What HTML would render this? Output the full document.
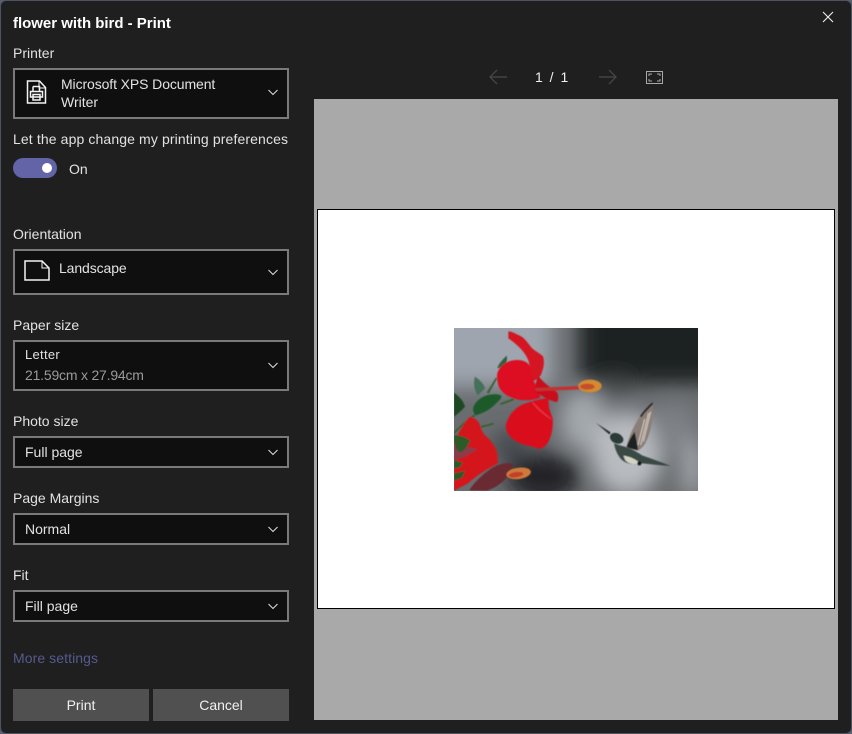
<!DOCTYPE html>
<html><head><meta charset="utf-8">
<style>
html,body{margin:0;padding:0;width:852px;height:734px;overflow:hidden;background:#5a5f72}
#win{position:absolute;left:1px;top:1px;width:850px;height:732px;background:#1f1f1f;border-radius:5px;box-shadow:0 0 0 1px #4f5260}
.t{position:absolute;font-family:"Liberation Sans",sans-serif;font-size:14px;color:#e2e2e2;white-space:nowrap;line-height:18px}
.box{position:absolute;left:13px;width:272px;background:#0f0f0f;border:2px solid #7a7a7a;box-sizing:content-box}
.chev{position:absolute;left:268px}
.btn{position:absolute;top:689px;width:136px;height:32px;background:#505050;color:#f0f0f0;font:14px/32px "Liberation Sans",sans-serif;text-align:center}
svg{position:absolute}
</style></head><body>
<div id="win"></div>

<div class="t" style="left:13px;top:15px;font-weight:bold;color:#fff;font-size:15px;letter-spacing:-.02px">flower with bird - Print</div>
<div class="t" style="left:13px;top:44px">Printer</div>

<div class="box" style="top:68px;height:47px"></div>
<svg style="left:26px;top:80px" width="21" height="24" viewBox="0 0 21 24" fill="none" stroke="#f4f4f4" stroke-width="1.5"><path d="M1.5 1h12l6 6.5V23h-18z"/><path d="M13 1v7h6.5" stroke-width="1"/><path d="M7 6.5h6.5v5M7 6.5v5M4.5 11.5h12V17h-12zM7 14.5h7V20H7z"/></svg>
<div class="t" style="left:61px;top:75px;letter-spacing:-.1px">Microsoft XPS Document</div>
<div class="t" style="left:61px;top:93px">Writer</div>

<div class="t" style="left:13px;top:130px;letter-spacing:.12px">Let the app change my printing preferences</div>
<div style="position:absolute;left:13px;top:158px;width:44px;height:20px;border-radius:10px;background:#6264a7"></div>
<div style="position:absolute;left:42px;top:163px;width:10px;height:10px;border-radius:50%;background:#fff"></div>
<div class="t" style="left:69px;top:160px">On</div>

<div class="t" style="left:13px;top:225px">Orientation</div>
<div class="box" style="top:249px;height:42px"></div>
<svg style="left:24px;top:260px" width="26" height="21" viewBox="0 0 26 21" fill="none" stroke="#f4f4f4" stroke-width="1.5"><path d="M1 1h17l7 7v12H1z"/><path d="M18 1v7h7" stroke-width="1"/></svg>
<div class="t" style="left:59px;top:259px;letter-spacing:-.1px">Landscape</div>

<div class="t" style="left:13px;top:316px">Paper size</div>
<div class="box" style="top:340px;height:47px"></div>
<div class="t" style="left:25px;top:346px;font-size:13px;letter-spacing:.3px">Letter</div>
<div class="t" style="left:25px;top:366px;color:#9a9a9a;letter-spacing:-.2px">21.59cm x 27.94cm</div>

<div class="t" style="left:13px;top:412px">Photo size</div>
<div class="box" style="top:436px;height:28px"></div>
<div class="t" style="left:25px;top:443px">Full page</div>

<div class="t" style="left:13px;top:489px">Page Margins</div>
<div class="box" style="top:513px;height:28px"></div>
<div class="t" style="left:25px;top:520px">Normal</div>

<div class="t" style="left:13px;top:566px">Fit</div>
<div class="box" style="top:590px;height:28px"></div>
<div class="t" style="left:25px;top:597px">Fill page</div>

<svg class="chev" style="top:89px" width="10" height="7" viewBox="0 0 10 7" fill="none" stroke="#d8d8d8" stroke-width="1.1"><path d="M.5 1 5 5.5 9.5 1"/></svg>
<svg class="chev" style="top:269px" width="10" height="7" viewBox="0 0 10 7" fill="none" stroke="#d8d8d8" stroke-width="1.1"><path d="M.5 1 5 5.5 9.5 1"/></svg>
<svg class="chev" style="top:362px" width="10" height="7" viewBox="0 0 10 7" fill="none" stroke="#d8d8d8" stroke-width="1.1"><path d="M.5 1 5 5.5 9.5 1"/></svg>
<svg class="chev" style="top:449px" width="10" height="7" viewBox="0 0 10 7" fill="none" stroke="#d8d8d8" stroke-width="1.1"><path d="M.5 1 5 5.5 9.5 1"/></svg>
<svg class="chev" style="top:526px" width="10" height="7" viewBox="0 0 10 7" fill="none" stroke="#d8d8d8" stroke-width="1.1"><path d="M.5 1 5 5.5 9.5 1"/></svg>
<svg class="chev" style="top:603px" width="10" height="7" viewBox="0 0 10 7" fill="none" stroke="#d8d8d8" stroke-width="1.1"><path d="M.5 1 5 5.5 9.5 1"/></svg>

<div class="t" style="left:13px;top:649px;color:#565a8e;letter-spacing:.08px">More settings</div>
<div class="btn" style="left:13px">Print</div>
<div class="btn" style="left:153px">Cancel</div>

<!-- top bar -->
<svg style="left:822px;top:11px" width="12" height="12" viewBox="0 0 12 12" stroke="#f0f0f0" stroke-width="1.1"><path d="M1 1l10 10M11 1 1 11"/></svg>
<svg style="left:489px;top:69px" width="19" height="16" viewBox="0 0 19 16" fill="none" stroke="#444" stroke-width="1.4"><path d="M18 8H1M8 1 1 8l7 7"/></svg>
<svg style="left:598px;top:69px" width="19" height="16" viewBox="0 0 19 16" fill="none" stroke="#444" stroke-width="1.4"><path d="M1 8h17M11 1l7 7-7 7"/></svg>
<div class="t" style="left:535px;top:68px;color:#f0f0f0;word-spacing:3px">1 / 1</div>
<svg style="left:646px;top:71px" width="17" height="13" viewBox="0 0 17 13" fill="none" stroke="#a8a8a8"><rect x=".5" y=".5" width="16" height="12"/><path d="M3 5V3h3M11 3h3v2M14 8v2h-3M6 10H3V8" stroke-width="1"/></svg>

<!-- preview -->
<div style="position:absolute;left:314px;top:99px;width:524px;height:621px;background:#a9a9a9"></div>
<div style="position:absolute;left:317px;top:209px;width:516px;height:398px;background:#fff;border:1px solid #000"></div>

<svg style="left:454px;top:328px" width="244" height="163" viewBox="42 24 732 489" preserveAspectRatio="none">
<defs>
<filter id="b8" x="-50%" y="-50%" width="200%" height="200%"><feGaussianBlur stdDeviation="30"/></filter>
<filter id="b1" x="-10%" y="-10%" width="120%" height="120%"><feGaussianBlur stdDeviation="1.6"/></filter>
<clipPath id="c"><rect x="42" y="24" width="732" height="489"/></clipPath>
</defs>
<g clip-path="url(#c)">
<rect x="42" y="24" width="732" height="489" fill="#6a6d70"/>
<g filter="url(#b8)">
<rect x="-60" y="-60" width="400" height="260" fill="#9ea5ae"/>
<rect x="420" y="-80" width="460" height="270" fill="#1e2120"/>
<ellipse cx="520" cy="200" rx="60" ry="30" fill="#4a4d4e"/>
<ellipse cx="430" cy="300" rx="70" ry="90" fill="#a2a7ac"/>
<ellipse cx="560" cy="400" rx="105" ry="125" fill="#b8bbc0"/>
<ellipse cx="700" cy="320" rx="70" ry="70" fill="#7d8185"/>
<ellipse cx="755" cy="440" rx="30" ry="90" fill="#a6aaae"/>
<ellipse cx="310" cy="470" rx="110" ry="70" fill="#202325"/>
<ellipse cx="210" cy="380" rx="55" ry="50" fill="#44494d"/>
</g>
<g filter="url(#b1)">
<!-- stems -->
<path d="M42 335c20-20 40-38 60-52l4 6c-22 14-42 32-64 54zM140 218l28-46 4 3-26 46zM180 250l42-16 1 6-40 15zM60 335l100-27 1 5-100 30z" fill="#3c5f30"/>
<!-- leaves -->
<path d="M42 218c14 10 28 24 33 42-10 12-22 22-33 30z" fill="#1d4a22"/>
<path d="M100 262c8-20 26-34 50-38 14-2 28-2 34 4 2 8-12 18-22 28-16 16-40 26-56 30-6-8-8-16-6-24z" fill="#1d5a2a"/>
<path d="M105 170c12 8 26 20 30 36l-22 20c-10-16-14-36-8-56z" fill="#45705a"/>
<path d="M172 145c4-14 16-26 28-38 2 8 1 18-4 26-6 4-14 10-24 12z" fill="#315e3c"/>
<!-- lower left flower -->
<path d="M42 370c10-26 28-60 48-80 14 4 26 12 30 26 4 12 8 24 18 32 14 12 26 28 34 50l2 32c-30 16-56 30-90 60l-42 22z" fill="#d4141f"/>
<path d="M42 380c24-2 50 0 70 8-20 12-44 28-70 32z" fill="#8c3a48"/>
<path d="M42 345c14 0 36 6 48 16-6 20-20 34-30 36-10-4-16-20-18-30zM42 420l26 8-8 14-18 4zM42 460l34-8-10 22-24 8z" fill="#2d5a2c"/>
<path d="M88 511c10-18 36-46 70-68 20-12 46-16 58-12 8 6-4 28-18 44-16 18-36 30-58 37z" fill="#6a2a30"/>
<!-- stamen 2 -->
<ellipse cx="236" cy="460" rx="37" ry="17" transform="rotate(-8 236 460)" fill="#cf7a3a"/>
<ellipse cx="228" cy="464" rx="22" ry="8" transform="rotate(-8 228 464)" fill="#c03f2c"/>
<!-- upper flower -->
<path d="M205 35c8-2 20 6 34 12 14 6 24 22 34 34 8 10 22 16 36 28 4 12 4 28-2 44-4 16-14 28-32 30-2-20-4-42-10-62-8-22-30-46-60-66z" fill="#d31420"/>
<path d="M172 160c6-22 30-40 58-40 16 0 34 4 40 20 6 18 6 42 22 62l10 30c-18 8-48 12-72 6-28-8-50-22-56-46-2-10-4-22-2-32z" fill="#dd1120"/>
<path d="M296 170c14 16 30 30 52 44 8 6 8 20 4 32-20-2-40-14-64-30-4-12-2-32 8-46z" fill="#c80f1c"/>
<!-- stamen -->
<path d="M285 204l130-6 3 10-130 6z" fill="#c23030"/>
<ellipse cx="450" cy="198" rx="35" ry="19" fill="#d58a30"/>
<ellipse cx="442" cy="200" rx="22" ry="9" fill="#c4502c"/>
<!-- lower flower -->
<path d="M197 318c6-30 28-58 60-68 24-8 50-14 68-16l2 30 11 32c2 22-2 50-14 72-8 12-20 20-32 18-12-8-32-8-46-14-28-10-48-28-49-54z" fill="#da101d"/>
<path d="M278 245c14 14 34 34 56 50l0 4c-22-14-44-30-58-52z" fill="#e8323e"/>
<!-- bird -->
<g transform="translate(450 225)">
<path d="M18 84l44 28-4 6z" fill="#22292a"/>
<ellipse cx="80" cy="130" rx="21" ry="15" transform="rotate(25 80 130)" fill="#2c3a38"/>
<path d="M72 145c14 6 30 8 44 14 14 6 28 14 40 22 28 10 58 20 86 32-30-2-62-6-86-8-18 4-38 4-54-6-16-10-26-32-30-54z" fill="#3a4a44"/>
<path d="M100 182c18 2 36 10 50 22-14 6-32 4-44-8z" fill="#d2d3c4"/>
<circle cx="148" cy="205" r="6" fill="#101212"/>
<path d="M110 155c6-30 22-64 40-92 10-14 24-30 38-42 3 40-4 86-20 120-6 12-14 20-24 26-14-2-26-6-34-12z" fill="#8a7f78"/>
<path d="M110 155c6-16 14-32 24-44 4 18 8 36 10 54-14-2-26-4-34-10z" fill="#1b2120"/>
<path d="M150 63c10-14 24-30 38-42l0 8c-12 12-24 24-34 38z" fill="#2b2a26"/>
<path d="M144 150l20-78M152 150l24-96M160 140l22-90" stroke="#d8cdc4" stroke-width="3" fill="none"/>
</g>
</g>
</g>
</svg>
</body></html>
